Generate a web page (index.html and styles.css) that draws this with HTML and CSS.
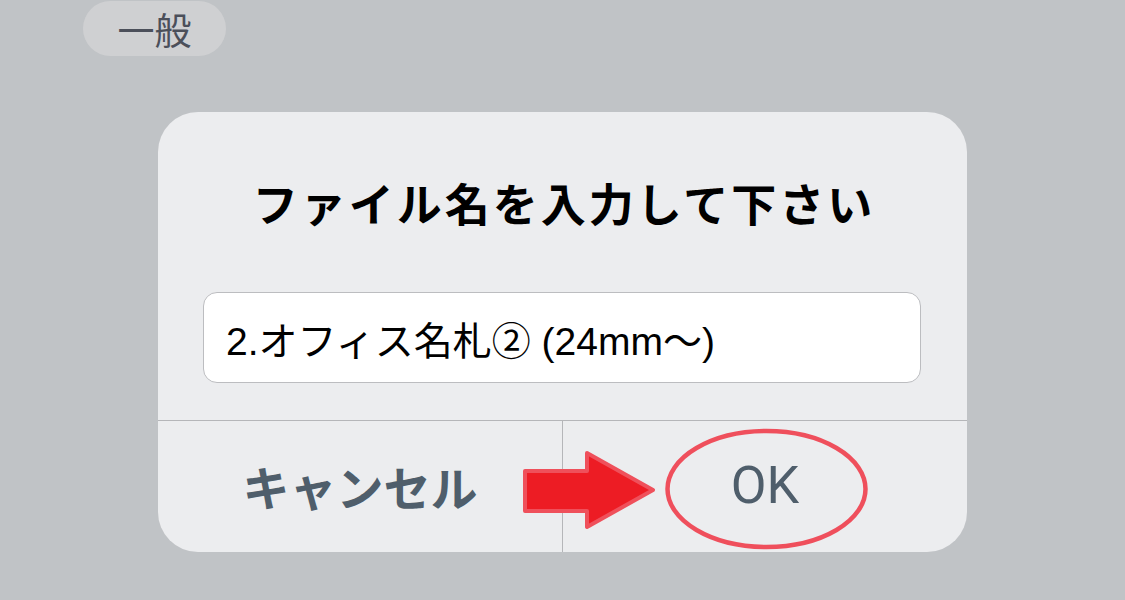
FILE: index.html
```html
<!DOCTYPE html>
<html lang="ja">
<head>
<meta charset="utf-8">
<link rel="stylesheet" href="styles.css">
</head>
<body>
<div class="page">
  <div class="pill">一般</div>
  <div class="dialog">
    <div class="title">ファイル名を入力して下さい</div>
    <div class="input">2.オフィス名札② (24mm～)</div>
    <div class="buttons">
      <div class="btn cancel">キャンセル</div>
      <div class="btn ok">OK</div>
    </div>
    <svg class="arrow" width="133" height="82" viewBox="0 0 133 82">
      <polygon points="2,22 64,22 64,4 130,41 64,78 64,62 2,62" fill="#ed1c24" stroke="#ef505b" stroke-width="4" stroke-linejoin="round"/>
    </svg>
    <svg class="ring" width="205" height="124" viewBox="0 0 205 124">
      <ellipse cx="102.5" cy="62" rx="99" ry="58" fill="none" stroke="#ef4f5c" stroke-width="4.5"/>
    </svg>
  </div>
</div>
</body>
</html>
```

FILE: styles.css
```css
html, body {
  margin: 0;
  padding: 0;
}
body {
  background: #c0c3c6;
  width: 1125px;
  height: 600px;
  overflow: hidden;
  font-family: "Liberation Sans", "Noto Sans CJK JP", sans-serif;
}
.page {
  display: flex;
  flex-direction: column;
  align-items: flex-start;
}
.pill {
  margin-top: 1px;
  margin-left: 83px;
  width: 143px;
  height: 55px;
  border-radius: 28px;
  background: #cfd0d2;
  color: #4b4f5a;
  font-family: "Noto Sans CJK JP", sans-serif;
  font-size: 37px;
  display: flex;
  align-items: center;
  justify-content: center;
}
.dialog {
  position: relative;
  margin-top: 56px;
  margin-left: 158px;
  width: 809px;
  height: 440px;
  border-radius: 40px;
  background: #ecedef;
  display: flex;
  flex-direction: column;
  box-sizing: border-box;
  padding-top: 61px;
}
.title {
  height: 60px;
  line-height: 60px;
  text-align: center;
  font-family: "Noto Sans CJK JP", sans-serif;
  font-weight: 700;
  font-size: 45px;
  letter-spacing: 3px;
  text-indent: 3px;
  color: #000;
}
.input {
  margin: 59px 46px 0 45px;
  height: 91px;
  box-sizing: border-box;
  border: 1px solid #bcbdc0;
  border-radius: 14px;
  background: #fff;
  padding-left: 22px;
  display: flex;
  align-items: center;
  font-size: 39px;
  color: #000;
}
.buttons {
  margin-top: 37px;
  flex: 1;
  display: flex;
  border-top: 1px solid #b5b6b9;
}
.btn {
  flex: 1;
  display: flex;
  align-items: center;
  justify-content: center;
  color: #4f5e6b;
}
.cancel {
  border-right: 1px solid #b5b6b9;
  font-family: "Noto Sans CJK JP", sans-serif;
  font-weight: 700;
  font-size: 47px;
  padding-bottom: 2px;
}
.ok {
  font-family: "Roboto", "Liberation Sans", sans-serif;
  font-size: 52px;
  padding-bottom: 2px;
}
.arrow {
  position: absolute;
  left: 365px;
  top: 337px;
}
.ring {
  position: absolute;
  left: 506px;
  top: 315px;
}
```
